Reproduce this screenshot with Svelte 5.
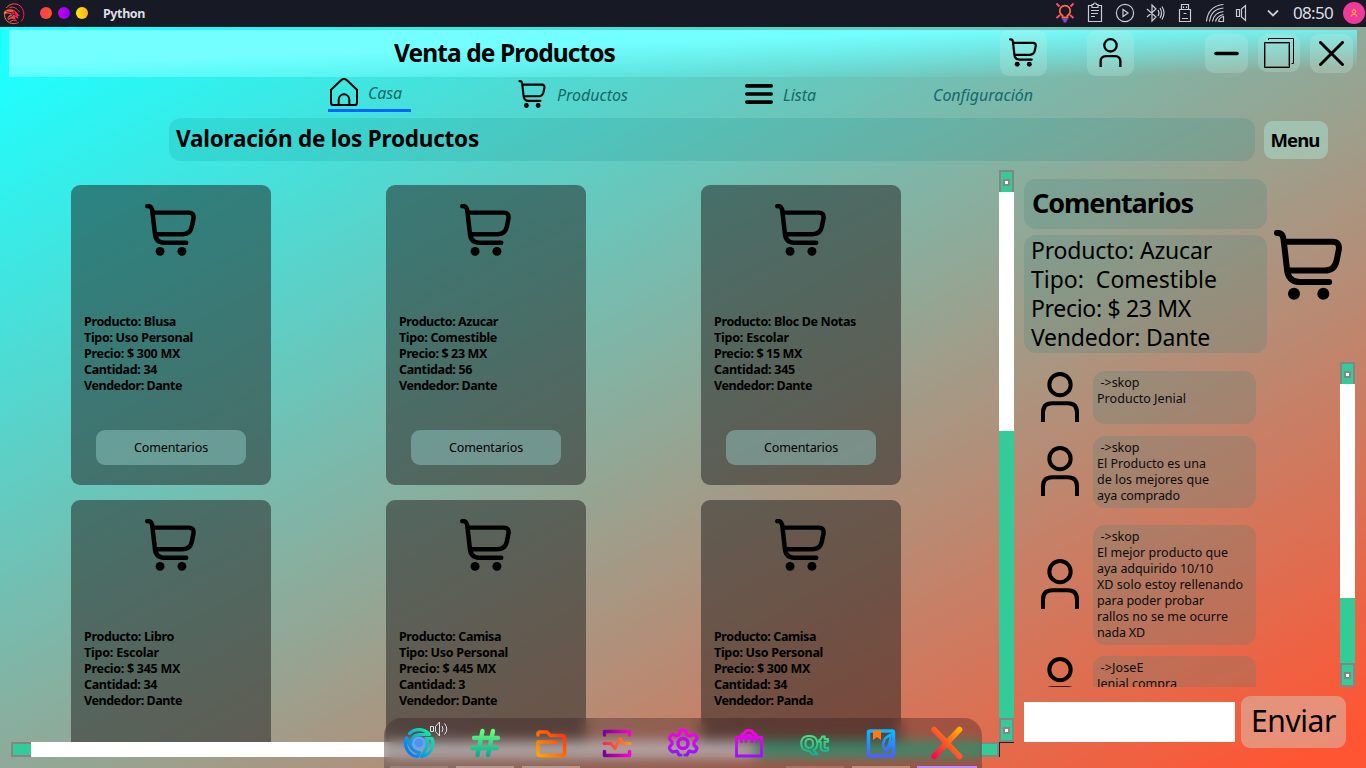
<script>
  const cards = [
    [['Producto: Blusa', 92], ['Tipo: Uso Personal', 109], ['Precio: $ 300 MX', 96], ['Cantidad: 34', 73], ['Vendedor: Dante', 98]],
    [['Producto: Azucar', 99], ['Tipo: Comestible', 98], ['Precio: $ 23 MX', 88], ['Cantidad: 56', 73], ['Vendedor: Dante', 98]],
    [['Producto: Bloc De Notas', 142], ['Tipo: Escolar', 75], ['Precio: $ 15 MX', 88], ['Cantidad: 345', 81], ['Vendedor: Dante', 98]],
    [['Producto: Libro', 90], ['Tipo: Escolar', 75], ['Precio: $ 345 MX', 96], ['Cantidad: 34', 73], ['Vendedor: Dante', 98]],
    [['Producto: Camisa', 102], ['Tipo: Uso Personal', 109], ['Precio: $ 445 MX', 97], ['Cantidad: 3', 66], ['Vendedor: Dante', 98]],
    [['Producto: Camisa', 102], ['Tipo: Uso Personal', 109], ['Precio: $ 300 MX', 96], ['Cantidad: 34', 73], ['Vendedor: Panda', 99]]
  ];
  const detail = [['Producto: Azucar', 181], ['Tipo:  Comestible', 186], ['Precio: $ 23 MX', 160], ['Vendedor: Dante', 179]];
  const comments = [
    { gap: 0, h: 53, user: ['->skop', 39], lines: [['Producto Jenial', 89]] },
    { gap: 12, h: 72, user: ['->skop', 39], lines: [['El Producto es una', 109], ['de los mejores que', 112], ['aya comprado', 83]] },
    { gap: 17, h: 120, user: ['->skop', 39], lines: [['El mejor producto que', 131], ['aya adquirido 10/10', 116], ['XD solo estoy rellenando', 146], ['para poder probar', 107], ['rallos no se me ocurre', 131], ['nada XD', 48]] },
    { gap: 11, h: 53, user: ['->JoseE', 43], lines: [['Jenial compra', 80]] }
  ];
  const dock = ['chrome', 'hash', 'folder', 'monitor', 'gear', 'bag', 'qt', 'book', 'close'];
  const bars = { chrome: 'dim', hash: 'on', folder: 'on', qt: 'dim', book: 'on', close: 'active' };

  // Spreads the letters so that a label takes the given width.
  function fit(node, width) {
    const natural = node.getBoundingClientRect().width;
    node.style.letterSpacing = (width - natural) / node.textContent.length + 'px';
  }
</script>

{#snippet label(t, w)}<span class="label" use:fit={w}>{t}</span>{/snippet}

{#snippet cart(w, h, s = 13.5)}
  <svg width={w} height={h} viewBox="0 0 153 157" fill="none" stroke="#000" stroke-width={s} stroke-linecap="round" stroke-linejoin="round">
    <path d="M6.500 6.500C17 5 21 12 22 25L29 86C30 106 40 117 57 117H124M23 26H132C143 26 147 33 146 43L141 68C138 83 130 91 114 91H30" />
    <circle cx="45" cy="143" r="13.500" fill="#000" stroke="none" />
    <circle cx="111" cy="143" r="13.500" fill="#000" stroke="none" />
  </svg>
{/snippet}

{#snippet person(w, h)}
  <svg width={w} height={h} viewBox="0 0 114 150" fill="none" stroke="#000" stroke-width="12">
    <circle cx="57" cy="38" r="32" />
    <path d="M6 150V122Q6 94 34 94H80Q108 94 108 122V150" />
  </svg>
{/snippet}

{#snippet stepper(kind)}
  <div class="stepper {kind}"><i></i></div>
{/snippet}

<div class="screen">
  <header class="system">
    <svg class="dragon" width="22" height="22" viewBox="0 0 66 66" fill="none" stroke="url(#dr)" stroke-width="4">
      <defs><linearGradient id="dr"><stop offset="0" stop-color="#ff7a3d" /><stop offset="1" stop-color="#ff1456" /></linearGradient></defs>
      <path d="M10 15C22-2 48-2 58 17C65 30 64 46 54 55M5 32C3 48 14 62 33 62Q41 62 47 58" stroke-width="3" />
      <path d="M3 27C13 17 26 15 37 25L50 39L43 38L46 47L35 40L38 50C28 45 20 45 16 52C12 43 17 37 26 34C18 30 11 30 3 33Z" fill="url(#dr)" stroke-width="1" />
      <path d="M10 26L31 30M15 46L30 37M32 24L36 33M24 32L40 37" stroke="#171924" stroke-width="2.500" />
      <path d="M20 13Q37 9 50 27M20 56Q30 48 42 54" stroke-width="2.500" />
    </svg>
    <div class="lights"><i></i><i></i><i></i></div>
    <b class="app">{@render label('Python', 42)}</b>
    <div class="tray">
      <svg viewBox="0 0 30 26"><g fill="none" stroke="#ff4b76" stroke-width="2"><path d="M6.500 3.500l3 3M23.500 3.500l-3 3M6.500 18l3.500-3M23.500 18l-3.500-3" /></g><path d="M12.500 17.500V15.500A5.300 5.300 0 1 1 17.500 15.500V17.500Z" fill="none" stroke="#ff6a42" stroke-width="1.800" /><path d="M12.500 19.500H17.500M13.500 21.500H16.500" stroke="#8b45d8" stroke-width="2" /></svg>
      <svg viewBox="0 0 30 26"><path d="M12 5.500H8.500V21.500H21.500V5.500H18M12 4.500H13.500A1.500 1.500 0 0 1 16.500 4.500H18V7.500H12ZM11 10.500H19M11 13.500H18M11 16.500H15" /></svg>
      <svg viewBox="0 0 30 26"><circle cx="15" cy="13" r="8.600" /><path d="M13 9.500V16.500L18 13Z" /></svg>
      <svg viewBox="0 0 30 26"><path d="M7 9L16 17L12 21V5L16 9L7 17M18 10Q20 13 18 16M20 8Q23 13 20 18M22 6.500Q26 13 22 19.500" /></svg>
      <svg viewBox="0 0 30 26"><path d="M11.500 9.500V4.500H18.500V9.500M9.500 9.500H20.500V21.500H9.500ZM13.500 6.500V8M16.500 6.500V8M13.500 13.500H16.500M12 18.500H18" /></svg>
      <svg viewBox="0 0 30 26"><path d="M6.500 21.500Q8 6 23.500 4.500M9.500 21.500Q11 9 23.500 8M12.500 21.500Q14 12.500 23.500 11.500M15.500 21.500Q17 16 23.500 14.500M18.500 21.500H23.500V16.500Q19 17.500 18.500 21.500" /></svg>
      <svg viewBox="0 0 30 26"><path d="M6.500 9.500H9.500V16.500H6.500ZM11.500 9L15.500 5.500V20.500L11.500 17Z" /></svg>
      <svg viewBox="0 0 30 26"><path d="M8 10.500L13 15.500L18 10.500" stroke-width="1.800" /></svg>
    </div>
    <span class="clock">{@render label('08:50', 40)}</span>
    <div class="avatar"><svg width="8" height="8" viewBox="0 0 8 8" fill="none" stroke="#ffa43b" stroke-width="1.200"><circle cx="4" cy="2.600" r="1.700" /><path d="M1.200 7.500C1.500 4.500 6.500 4.500 6.800 7.500" /></svg></div>
  </header>

  <main class="window">
    <div class="title">
      <h1>{@render label('Venta de Productos', 221)}</h1>
      <button class="tool">{@render cart(28, 29, 12)}</button>
      <button class="tool user">{@render person(23, 29)}</button>
      <button class="win min"><svg width="25" height="5" viewBox="0 0 25 5"><path d="M2 2.500H23" stroke="#000" stroke-width="3.600" stroke-linecap="round" /></svg></button>
      <button class="win max"><svg width="30" height="30" viewBox="0 0 30 30" fill="none" stroke="#000"><path d="M.5 4.500H25.500V29.500H.5ZM4.500 2V.5H29.500V25.500H27.500" /><path d="M1.500 5.500H24.500V28.500H1.500Z" stroke-opacity=".4" /></svg></button>
      <button class="win"><svg width="25" height="25" viewBox="0 0 25 25"><path d="M1.500 1.500L23.500 23.500M23.500 1.500L1.500 23.500" stroke="#000" stroke-width="3" stroke-linecap="round" /></svg></button>
    </div>

    <nav>
      <a class="home active"><svg width="28" height="28" viewBox="0 0 84 84" fill="none" stroke="#000" stroke-width="6"><path d="M3 35L34 6Q42 0 50 6L81 35V74Q81 81 74 81H10Q3 81 3 74ZM26 81V65A16 16 0 0 1 58 65V81" /></svg>{@render label('Casa', 34)}</a>
      <a class="products">{@render cart(28, 28, 12)}{@render label('Productos', 71)}</a>
      <a class="list"><svg width="28" height="20" viewBox="0 0 28 20" stroke="#000" stroke-width="3.600" stroke-linecap="round"><path d="M1.800 1.900H26.200M1.800 10H26.200M1.800 18.100H26.200" /></svg>{@render label('Lista', 33)}</a>
      <a class="config">{@render label('Configuración', 100)}</a>
    </nav>

    <div class="heading">
      <h2>{@render label('Valoración de los Productos', 303)}</h2>
      <button>{@render label('Menu', 49)}</button>
    </div>

    <div class="body">
      <section class="catalog">
        <div class="cards">
          {#each cards as lines, n}
            <article>
              {@render cart(51, 52)}
              <div class="facts">{#each lines as [t, w]}<p>{@render label(t, w)}</p>{/each}</div>
              {#if n < 3}<button>{@render label('Comentarios', 74)}</button>{/if}
            </article>
          {/each}
        </div>
        <div class="vbar">
          {@render stepper('up')}
          <div class="handle"></div>
          {@render stepper('down')}
        </div>
        <div class="hbar">
          <div class="left"></div><div class="handle"></div><div class="right"></div>
        </div>
        <div class="corner"></div>
      </section>

      <aside>
        <div class="top">
          <div class="boxes">
            <h3>{@render label('Comentarios', 161)}</h3>
            <div class="detail">{#each detail as [t, w]}<p>{@render label(t, w)}</p>{/each}</div>
          </div>
          {@render cart(68, 70)}
        </div>
        <div class="thread">
          <div class="posts">
            {#each comments as c}
              <div class="comment" style="margin-top:{c.gap}px;height:{c.h}px">
                {@render person(38, 50)}
                <div class="bubble">
                  <p class="who">{@render label(c.user[0], c.user[1])}</p>
                  {#each c.lines as [t, w]}<p>{@render label(t, w)}</p>{/each}
                </div>
              </div>
            {/each}
          </div>
          <div class="vbar">
            {@render stepper('up')}
            <div class="handle"></div>
            {@render stepper('down')}
          </div>
        </div>
        <div class="send">
          <input />
          <button>{@render label('Enviar', 85)}</button>
        </div>
      </aside>
    </div>
  </main>

  <div class="dock">
    {#each dock as name}
      <div class="slot {bars[name] ?? ''}">
        <svg width="32" height="34" viewBox="-1 -2 32 34" fill="none" stroke-width="3.500" stroke-linecap="round" stroke-linejoin="round">
          {#if name === 'chrome'}
            <defs><linearGradient id="c1" gradientUnits="userSpaceOnUse" x1="3" y1="24" x2="24" y2="4"><stop offset="0" stop-color="#0878ff" /><stop offset="1" stop-color="#13e6a4" /></linearGradient></defs>
            <g stroke="url(#c1)" stroke-width="3.200"><path d="M5.500 5.500A13.500 13.500 0 0 1 25.500 6.500H15Q8.500 7 7.500 13.500" /><path d="M2.500 10A13.500 13.500 0 0 0 13.500 28.500L15.500 24.500Q8 24 5.500 16Z" /><path d="M22.500 10.500H28A13.500 13.500 0 0 1 17.500 28.500L23 19Q25 14 22 10.500" /></g>
            <circle cx="15" cy="15" r="5.500" fill="#4f93e8" stroke="#62a4ff" stroke-width="2.500" />
          {:else if name === 'hash'}
            <defs><linearGradient id="h1" gradientUnits="userSpaceOnUse" x1="0" y1="2" x2="0" y2="28"><stop stop-color="#6bff78" /><stop offset="1" stop-color="#08a89a" /></linearGradient></defs>
            <path d="M12.500 3L7.500 27M23 3L18 27M4 10H28M2.500 20H26.500" stroke="url(#h1)" stroke-width="4.400" />
          {:else if name === 'folder'}
            <defs><linearGradient id="f1" x1="0" y1="1" x2="1" y2="0"><stop stop-color="#ffa600" /><stop offset="1" stop-color="#ff2c08" /></linearGradient></defs>
            <path d="M2 7V6Q2 4 4 4H11L14.500 7.500H26Q28.500 7.500 28.500 10V24.500Q28.500 27.500 26 27.500H4.500Q2 27.500 2 25V14H20.500" stroke="url(#f1)" />
          {:else if name === 'monitor'}
            <defs><linearGradient id="m1"><stop stop-color="#7c009d" /><stop offset="1" stop-color="#ff00d0" /></linearGradient><linearGradient id="m2"><stop stop-color="#ff2450" /><stop offset="1" stop-color="#ff9020" /></linearGradient></defs>
            <path d="M2.500 7V3.500H27.500V7M2.500 23.500V27.500H27.500V23.500" stroke="url(#m1)" />
            <path d="M2 15.500H9L13 20.500L18 10.500L21 15.500H28" stroke="url(#m2)" stroke-width="3" />
          {:else if name === 'gear'}
            <defs><linearGradient id="g1" x2="0" y2="1"><stop stop-color="#ff00e6" /><stop offset="1" stop-color="#8a18ff" /></linearGradient></defs>
            <path d="M12 3Q15 1 18 3L19 7L22 8L26 6Q29 8 29 11L26 14V17L29 20Q28 24 25 24L21 23L19 27H17M13 27H11L9 23L5 24Q1 22 1.500 19L4 16V14L1.500 11Q2 7 5 6L8 8L11 7L12 3" stroke="url(#g1)" stroke-width="3.200" />
            <circle cx="15" cy="15.500" r="5" stroke="#bf08f6" />
          {:else if name === 'bag'}
            <defs><linearGradient id="b1" x2="0" y2="1"><stop stop-color="#ff00e6" /><stop offset="1" stop-color="#9a12ff" /></linearGradient></defs>
            <path d="M2.500 9.500H27.500V28H2.500ZM7.500 13.500V9Q7.500 6 10.500 5.500Q11 2.500 15 2.500T19.500 5.500Q22.500 6 22.500 9V13.500M12 13.500V9Q15 5.500 18 9V13.500" stroke="url(#b1)" stroke-width="2.800" stroke-linejoin="miter" />
          {:else if name === 'qt'}
            <defs><linearGradient id="q1" x2="0" y2="1"><stop stop-color="#65f57f" /><stop offset="1" stop-color="#0aa992" /></linearGradient></defs>
            <text x="0" y="23" font-family="Noto Sans" font-weight="800" font-size="22" textLength="29" lengthAdjust="spacingAndGlyphs" stroke="url(#q1)" stroke-width="1.900">Qt</text>
          {:else if name === 'book'}
            <defs><linearGradient id="k1" x2="0" y2="1"><stop stop-color="#08b9ff" /><stop offset="1" stop-color="#4c60ff" /></linearGradient></defs>
            <rect x="2.500" y="3" width="25" height="25" rx="1.500" stroke="url(#k1)" />
            <path d="M27 6Q18.500 8 17 16Q16.500 21.500 20 21Q23.500 19 24.500 8.500M26.500 13Q25 21 18.500 23.500" stroke="url(#k1)" stroke-width="2.400" />
            <path d="M7 2.500H15V12L11 9L7 12Z" fill="#ff7b12" />
          {:else}
            <defs><linearGradient id="x1" x1="0" y1="1" x2="1" y2="0"><stop stop-color="#ff064c" /><stop offset="1" stop-color="#ffae00" /></linearGradient></defs>
            <path d="M2 1.500L27.500 28.500M27.500 1.500L2 28.500" stroke="url(#x1)" stroke-width="5.600" />
          {/if}
        </svg>
        {#if name === 'chrome'}
          <svg class="sound" width="20" height="18" viewBox="0 0 20 18" fill="none" stroke="#dfe1ea"><path d="M1.500 6.500H4.500V11.500H1.500ZM6.500 6.500L10.500 2V16L6.500 11.500ZM13 6Q15 9 13 12M15.500 3.500Q20 9 15.500 14.500" /></svg>
        {/if}
      </div>
    {/each}
  </div>
</div>

<style>
  :global(body) { margin: 0; overflow: hidden; }
  * { box-sizing: border-box; }
  h1, h2, h3, p { margin: 0; }
  button { border: 0; padding: 0; font: inherit; color: inherit; display: flex; align-items: center; justify-content: center; background: rgba(195, 240, 232, .26); flex: none; }
  svg { display: block; flex: none; }
  .label { display: inline-block; white-space: pre; }
  .screen { position: relative; width: 1366px; height: 768px; overflow: hidden; font-family: 'Noto Sans', sans-serif; color: #000; display: flex; flex-direction: column; }

  .system { height: 27px; background: #171924; display: flex; align-items: center; padding-left: 3px; flex: none; }
  .lights { display: flex; gap: 6px; margin: -1px 0 0 15px; }
  .lights i { width: 12px; height: 12px; border-radius: 50%; background: linear-gradient(90deg, #ff3c58, #ff5323); }
  .lights i:nth-child(2) { background: linear-gradient(90deg, #d000e0, #8200ff); }
  .lights i:nth-child(3) { background: linear-gradient(90deg, #ffee00, #ffae26); }
  .app { margin-left: 15px; font-size: 12.500px; width: 42px; color: #dcdde4; white-space: nowrap; }
  .tray { display: flex; margin-left: 905px; width: 243px; margin-top: -1px; }
  .tray svg { width: 30px; height: 26px; fill: none; stroke: #c9cbd4; stroke-width: 1.200; }
  .clock { width: 50px; font-size: 17px; color: #dcdde4; line-height: 24px; padding-bottom: 2px; }
  .avatar { width: 22px; height: 22px; border-radius: 50%; background: #ef3a9b; display: grid; place-items: center; flex: none; margin-top: -1px; }

  .window { flex: 1; min-height: 0; padding-top: 3px; background: linear-gradient(to bottom right, #1effff 3%, #ff5533 97%); display: flex; flex-direction: column; }
  .title { height: 47px; margin: 0 9px; flex: none; display: flex; align-items: center; background: linear-gradient(to bottom right, #73ffff 36%, rgba(115, 255, 255, 0) 90%); }
  h1 { font-size: 24.500px; line-height: 44px; height: 46px; width: 606px; margin-left: 385px; white-space: nowrap; }
  .tool { width: 47px; height: 46px; border-radius: 9px; padding-bottom: 1px; margin-top: -1px; }
  .tool:not(.user) { padding-right: 2px; }
  .user { margin-left: 40px; }
  .win { width: 43px; height: 39px; border-radius: 9px; margin-left: 10px; }
  .win.min { margin-left: 71px; }
  .win.max { width: 42px; height: 38px; margin-top: -1px; padding-bottom: 1px; }

  nav { height: 41px; flex: none; display: flex; align-items: flex-start; padding-left: 328px; font-size: 16px; font-style: italic; color: #15696a; }
  nav a { display: flex; align-items: center; height: 35px; }
  .home { width: 83px; padding-left: 2px; gap: 10px; border-bottom: 3px solid #0066ff; }
  .home svg { margin-top: -2px; }
  .products { width: 226px; margin-left: 107px; gap: 11px; }
  .products > :global(svg), .list > :global(svg) { margin-top: -2px; }
  .list { gap: 10px; width: 188px; margin-left: 1px; }
  .config { width: 120px; }

  .heading { height: 43px; flex: none; margin-left: 169px; display: flex; align-items: center; gap: 9px; }
  h2 { width: 1086px; height: 43px; border-radius: 12px; background: rgba(0, 128, 128, .15); font-size: 22.500px; line-height: 42px; padding-left: 7px; }
  .heading button { width: 64px; height: 38px; border-radius: 9px; font-size: 18.500px; font-weight: 700; background: rgba(170, 225, 210, .5); padding-right: 2px; }

  .body { flex: 1; min-height: 0; display: flex; padding: 9px 0 0 11px; }
  .catalog { width: 1003px; height: 587px; display: grid; grid-template: 572px 15px / 988px 15px; }
  .cards { overflow: hidden; display: grid; grid-template-columns: repeat(3, 200px); grid-auto-rows: 300px; gap: 15px 115px; padding: 15px 0 0 60px; align-content: start; }
  article { background: rgba(30, 30, 30, .5); border-radius: 9px; padding: 19px 13px 0; display: flex; flex-direction: column; align-items: center; }
  article > :global(svg) { margin-right: 2px; }
  .facts { width: 174px; margin-top: 58px; font-size: 12.500px; font-weight: 700; height: 80px; }
  .facts p, .bubble p { line-height: 16px; height: 16px; }
  article button { width: 150px; height: 35px; border-radius: 9px; margin-top: 36px; font-size: 12.500px; background: rgba(152, 212, 208, .44); }

  .vbar { width: 15px; display: flex; flex-direction: column; background: #33cc99; }
  .stepper { height: 22px; border: 2px solid #858585; border-bottom: 0; background: #33cc99; padding: 7px 0 0 2px; flex: none; }
  .stepper.down { height: 24px; border-bottom: 2px solid #858585; margin-top: auto; }
  .stepper i { display: block; width: 7px; height: 7px; border: 2px solid #858585; background: #fff; }
  .handle { background: #fff; }
  .catalog .vbar .handle { height: 239px; }
  .thread .vbar .handle { height: 214px; }
  .hbar { display: flex; background: #33cc99; }
  .hbar .left { width: 20px; border: 2px solid #858585; border-right: 0; }
  .hbar .handle { width: 724px; }
  .hbar .right { width: 20px; margin-left: auto; border: 2px solid #858585; }
  .corner { border: solid #26201f; border-width: 1px 0 0 1px; }

  aside { margin-left: 10px; width: 331px; padding-top: 9px; }
  .top { display: flex; align-items: center; gap: 7px; height: 174px; }
  .top > :global(svg) { margin-top: -2px; }
  .boxes { width: 243px; display: flex; flex-direction: column; gap: 6px; }
  h3, .detail, .bubble { background: rgba(50, 130, 125, .2); border-radius: 12px; }
  h3 { height: 50px; line-height: 48px; padding-left: 8px; font-size: 27px; }
  .detail { height: 118px; padding: 1px 0 0 7px; font-size: 23px; }
  .detail p { height: 29px; line-height: 29px; }
  .thread { margin-top: 9px; height: 325px; display: flex; justify-content: space-between; }
  .posts { height: 325px; padding: 9px 0 0 17px; overflow: hidden; }
  .comment { display: flex; align-items: center; gap: 14px; font-size: 12.500px; color: #0b0b0b; }
  .comment > :global(svg) { margin-top: -2px; }
  .bubble { width: 163px; height: 100%; padding: 4px 0 0 4px; }
  .who { padding-left: 3.500px; }
  .send { display: flex; align-items: center; gap: 6px; margin-top: 9px; height: 52px; }
  input { width: 211px; height: 40px; border: 0; background: #fff; padding: 0; }
  .send button { width: 105px; height: 52px; border-radius: 9px; background: rgba(210, 210, 200, .45); font-size: 30px; padding-bottom: 3px; }

  .dock { position: absolute; left: 384px; top: 718px; width: 598px; height: 60px; padding-left: 2px; display: flex; border-radius: 18px 18px 0 0; background: rgba(48, 27, 32, .34); backdrop-filter: blur(7px); }
  .slot { position: relative; width: 66px; height: 50px; padding: 8px 17px 0; border-bottom: 2px solid transparent; background: linear-gradient(transparent, transparent) no-repeat 4px 48px / 58px 2px; background-origin: border-box; background-clip: border-box; }
  .slot.dim { background-image: linear-gradient(rgba(255, 255, 255, .14), rgba(255, 255, 255, .14)); }
  .slot.on { background-image: linear-gradient(rgba(255, 255, 255, .32), rgba(255, 255, 255, .32)); }
  .slot.active { background-image: linear-gradient(#bd8cff, #bd8cff); background-size: 60px 2px; background-position: 3px 48px; }
  .sound { position: absolute; left: 43px; top: 2px; }
</style>
